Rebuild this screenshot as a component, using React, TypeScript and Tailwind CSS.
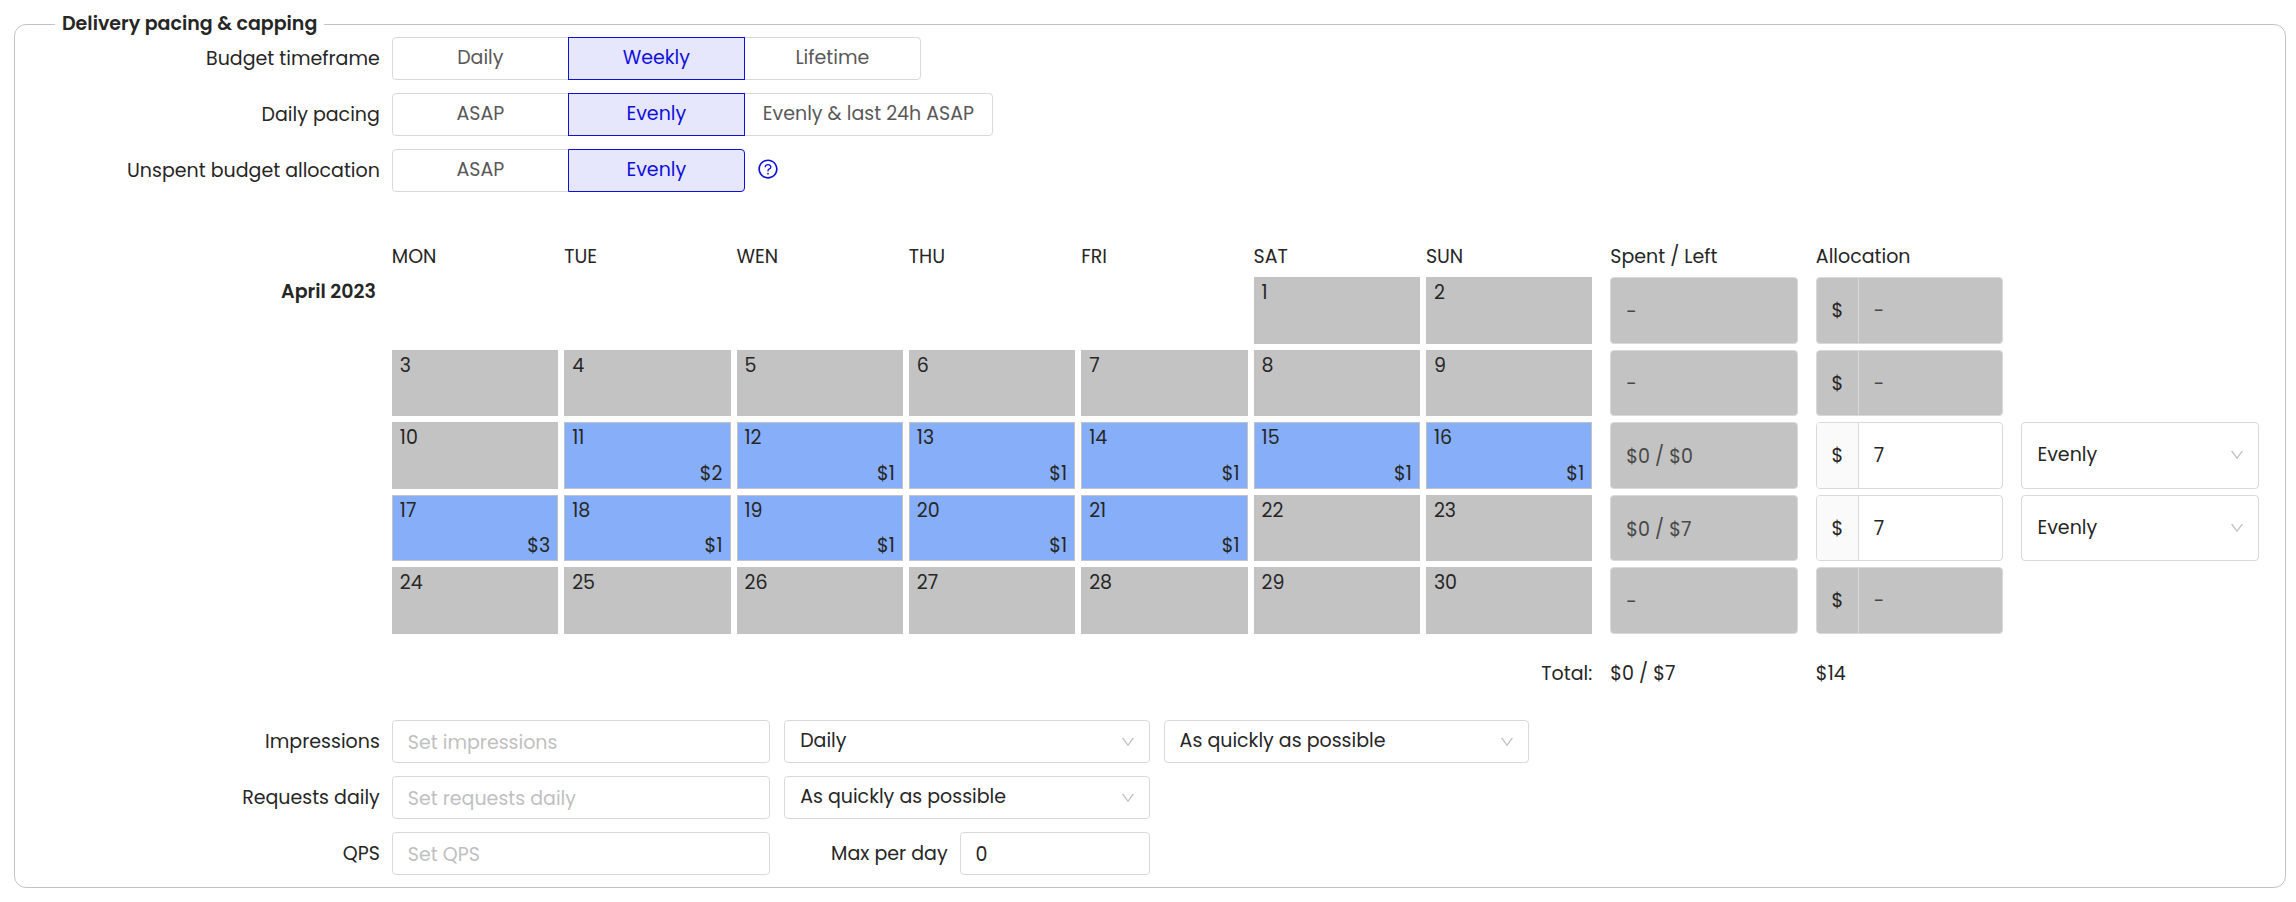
import clsx from "clsx";
import { useState } from "react";
import type { ReactNode } from "react";
import { AiOutlineDown, AiOutlineQuestionCircle } from "react-icons/ai";

interface Week {
    days: (number | null)[];
    amounts: Record<number, string>;
    spent: string;
    allocation: string;
    editable: boolean;
}

const WEEKDAYS = ["MON", "TUE", "WEN", "THU", "FRI", "SAT", "SUN"];

const WEEKS: Week[] = [
    {
        days: [null, null, null, null, null, 1, 2],
        amounts: {},
        spent: "-",
        allocation: "-",
        editable: false,
    },
    {
        days: [3, 4, 5, 6, 7, 8, 9],
        amounts: {},
        spent: "-",
        allocation: "-",
        editable: false,
    },
    {
        days: [10, 11, 12, 13, 14, 15, 16],
        amounts: { 11: "$2", 12: "$1", 13: "$1", 14: "$1", 15: "$1", 16: "$1" },
        spent: "$0 / $0",
        allocation: "7",
        editable: true,
    },
    {
        days: [17, 18, 19, 20, 21, 22, 23],
        amounts: { 17: "$3", 18: "$1", 19: "$1", 20: "$1", 21: "$1" },
        spent: "$0 / $7",
        allocation: "7",
        editable: true,
    },
    {
        days: [24, 25, 26, 27, 28, 29, 30],
        amounts: {},
        spent: "-",
        allocation: "-",
        editable: false,
    },
];

const ROW_COLUMNS =
    "grid grid-cols-[repeat(7,10fr)_12fr_12fr_15fr] gap-x-1.5";

interface SegmentedProps {
    id: string;
    label: string;
    options: string[];
    initial: string;
    children?: ReactNode;
}

const Segmented = ({ id, label, options, initial, children }: SegmentedProps) => {
    const [value, setValue] = useState(initial);

    return (
        <div className="flex items-center">
            <span id={id} className="w-[16.6%] shrink-0 pt-0.5 pr-3 text-right">
                {label}
            </span>

            <div role="group" aria-labelledby={id} className="flex h-[43px]">
                {options.map((option) => (
                    <button
                        key={option}
                        type="button"
                        aria-pressed={option === value}
                        onClick={() => setValue(option)}
                        className={clsx(
                            "-ml-px min-w-[177px] border px-[18px] first:ml-0 first:rounded-l last:rounded-r",
                            option === value
                                ? "z-10 border-[#1010dc] bg-[#e6e6fc] text-[#1010dc]"
                                : "border-[#d9d9d9] bg-white text-[#595959]",
                        )}
                    >
                        {option}
                    </button>
                ))}
            </div>

            {children}
        </div>
    );
};

interface SelectBoxProps {
    label: string;
    options: string[];
    className?: string;
}

const SelectBox = ({ label, options, className }: SelectBoxProps) => (
    <div className={clsx("relative", className)}>
        <select
            aria-label={label}
            className="h-full w-full appearance-none rounded border border-[#d9d9d9] bg-white pr-10 pl-[15px]"
        >
            {options.map((option) => (
                <option key={option}>{option}</option>
            ))}
        </select>

        <AiOutlineDown className="pointer-events-none absolute top-1/2 right-3.5 -translate-y-1/2 text-base text-[#bfbfbf]" />
    </div>
);

interface FieldRowProps {
    id: string;
    label: string;
    placeholder: string;
    children: ReactNode;
}

const FieldRow = ({ id, label, placeholder, children }: FieldRowProps) => (
    <div className="flex h-[43px] items-center">
        <label
            htmlFor={id}
            className="w-[16.6%] shrink-0 pt-0.5 pr-3 text-right"
        >
            {label}
        </label>

        <input
            id={id}
            type="text"
            placeholder={placeholder}
            className="mr-3.5 h-full w-1/6 rounded border border-[#d9d9d9] px-[15px] pt-0.5 placeholder:text-[#bfbfbf]"
        />

        {children}
    </div>
);

const DayCell = ({ day, amount }: { day: number | null; amount?: string }) => {
    if (day === null) {
        return <td />;
    }

    return (
        <td
            className={clsx(
                "flex flex-col justify-between border border-[#c3c3c3] px-[7px] pt-[3px] pb-0.5 leading-6",
                amount ? "bg-[#87aef9]" : "bg-[#c3c3c3]",
            )}
        >
            <span>{day}</span>
            {amount && <span className="text-right">{amount}</span>}
        </td>
    );
};

const WeekRow = ({ week, index }: { week: Week; index: number }) => (
    <tr className={ROW_COLUMNS}>
        {week.days.map((day, i) => (
            <DayCell
                key={i}
                day={day}
                amount={day === null ? undefined : week.amounts[day]}
            />
        ))}

        <td className="min-w-0 pl-3">
            <input
                type="text"
                disabled
                aria-label={`Spent and left, week ${index + 1}`}
                defaultValue={week.spent}
                className="h-full w-full rounded border border-[#d9d9d9] bg-[#c3c3c3] px-[15px] pt-0.5 text-[#484848]"
            />
        </td>

        <td className="min-w-0 pl-3">
            <div
                className={clsx(
                    "flex h-full overflow-hidden rounded border border-[#d9d9d9]",
                    week.editable ? "bg-white" : "bg-[#c3c3c3]",
                )}
            >
                <span
                    className={clsx(
                        "flex w-[42px] shrink-0 items-center justify-center border-r border-[#d9d9d9] pt-0.5",
                        week.editable && "bg-[#fafafa]",
                    )}
                >
                    $
                </span>

                <input
                    type="text"
                    disabled={!week.editable}
                    aria-label={`Allocation, week ${index + 1}`}
                    defaultValue={week.allocation}
                    className={clsx(
                        "min-w-0 flex-1 px-[15px] pt-0.5",
                        !week.editable && "text-[#484848]",
                    )}
                />
            </div>
        </td>

        <td className="min-w-0 pl-3">
            {week.editable && (
                <SelectBox
                    label={`Pacing, week ${index + 1}`}
                    options={["Evenly", "ASAP"]}
                    className="h-full"
                />
            )}
        </td>
    </tr>
);

const Calendar = () => (
    <div className="mt-[51px] flex">
        <div className="w-[16.6%] shrink-0 pt-[35px] pr-4 text-right leading-7 font-semibold">
            April 2023
        </div>

        <table className="mr-[26px] block min-w-0 flex-1">
            <thead className="block pb-1.5 text-left leading-7">
                <tr className={ROW_COLUMNS}>
                    {WEEKDAYS.map((weekday) => (
                        <th key={weekday} className="font-normal">
                            {weekday}
                        </th>
                    ))}
                    <th className="pl-3 font-normal">Spent / Left</th>
                    <th className="pl-3 font-normal">Allocation</th>
                </tr>
            </thead>

            <tbody className="grid h-[357px] auto-rows-fr gap-y-1.5">
                {WEEKS.map((week, index) => (
                    <WeekRow key={index} week={week} index={index} />
                ))}
            </tbody>

            <tfoot className="block pt-[26px] leading-7">
                <tr className={ROW_COLUMNS}>
                    <th
                        colSpan={7}
                        className="col-span-7 text-right font-normal"
                    >
                        Total:
                    </th>
                    <td className="pl-3">$0 / $7</td>
                    <td className="pl-3">$14</td>
                </tr>
            </tfoot>
        </table>
    </div>
);

const App = () => (
    <main className="overflow-hidden bg-white font-[Poppins,Inter,sans-serif] text-[19px] text-[#262626]">
        <fieldset className="mt-3 mr-2.5 mb-3.5 ml-3.5 rounded-xl border border-[#c3c3c3] pt-px pb-3">
            <legend className="ml-10 px-[7px] leading-6 font-semibold">
                Delivery pacing &amp; capping
            </legend>

            {/* Pacing switches */}
            <div className="flex flex-col gap-[13px]">
                <Segmented
                    id="budget-timeframe"
                    label="Budget timeframe"
                    options={["Daily", "Weekly", "Lifetime"]}
                    initial="Weekly"
                />
                <Segmented
                    id="daily-pacing"
                    label="Daily pacing"
                    options={["ASAP", "Evenly", "Evenly & last 24h ASAP"]}
                    initial="Evenly"
                />
                <Segmented
                    id="unspent-budget"
                    label="Unspent budget allocation"
                    options={["ASAP", "Evenly"]}
                    initial="Evenly"
                >
                    <button
                        type="button"
                        aria-label="About unspent budget allocation"
                        className="mb-1 ml-3 text-[22px] text-[#1010dc]"
                    >
                        <AiOutlineQuestionCircle />
                    </button>
                </Segmented>
            </div>

            <Calendar />

            {/* Capping */}
            <div className="mt-8 flex flex-col gap-[13px]">
                <FieldRow
                    id="impressions"
                    label="Impressions"
                    placeholder="Set impressions"
                >
                    <SelectBox
                        label="Impressions period"
                        options={["Daily", "Weekly", "Lifetime"]}
                        className="mr-3.5 h-full w-[16.1%]"
                    />
                    <SelectBox
                        label="Impressions pacing"
                        options={["As quickly as possible", "Evenly"]}
                        className="h-full w-[16.1%]"
                    />
                </FieldRow>

                <FieldRow
                    id="requests-daily"
                    label="Requests daily"
                    placeholder="Set requests daily"
                >
                    <SelectBox
                        label="Requests pacing"
                        options={["As quickly as possible", "Evenly"]}
                        className="h-full w-[16.1%]"
                    />
                </FieldRow>

                <FieldRow id="qps" label="QPS" placeholder="Set QPS">
                    <div className="flex h-full w-[16.1%] items-center">
                        <label
                            htmlFor="max-per-day"
                            className="flex-1 pt-0.5 pr-3 text-right"
                        >
                            Max per day
                        </label>
                        <input
                            id="max-per-day"
                            type="text"
                            defaultValue="0"
                            className="h-full w-[52%] rounded border border-[#d9d9d9] px-[15px] pt-0.5"
                        />
                    </div>
                </FieldRow>
            </div>
        </fieldset>
    </main>
);

export default App;
